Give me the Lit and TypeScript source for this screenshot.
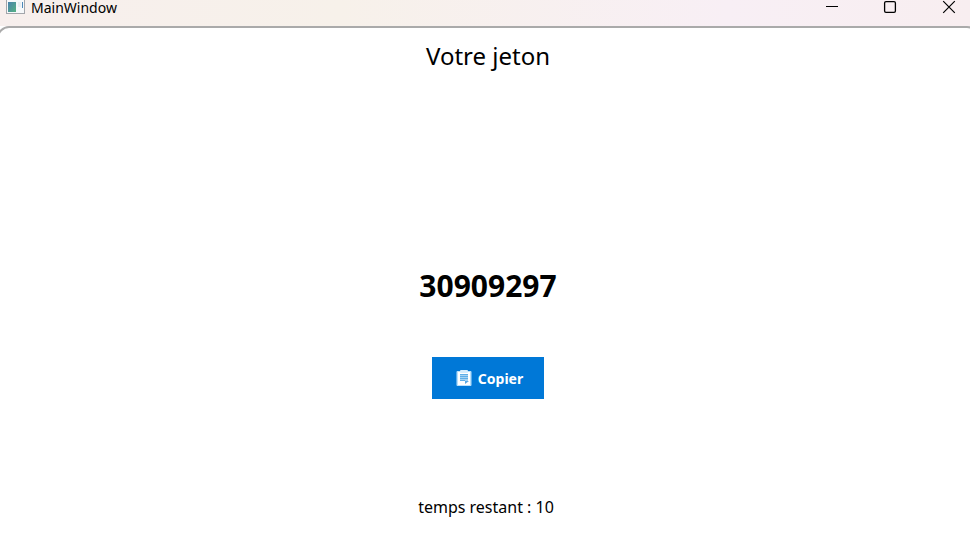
import { LitElement, html, css } from "lit";
import { customElement, property } from "lit/decorators.js";

@customElement("title-bar")
class TitleBar extends LitElement {
  @property() caption = "";

  static styles = css`
    :host {
      display: flex;
      align-items: flex-start;
      justify-content: space-between;
      height: 26px;
      background: linear-gradient(90deg, #f7efed 0%, #f7f1ea 35%, #f8eff5 75%, #f8eef0 100%);
      color: #000;
    }
    .caption {
      display: flex;
      align-items: flex-start;
      gap: 6px;
      padding-left: 6px;
      font-size: 14px;
      line-height: 16px;
    }
    .controls {
      display: flex;
    }
    button {
      display: flex;
      justify-content: center;
      width: 58px;
      height: 16px;
      padding: 0;
      border: 0;
      background: none;
      color: inherit;
    }
    .close {
      width: 51px;
      padding-left: 9px;
    }
    svg {
      display: block;
    }
  `;

  render() {
    return html`
      <div class="caption">
        <svg width="19" height="15" viewBox="0 0 19 15" aria-hidden="true">
          <defs>
            <linearGradient id="pane" x1="0" y1="0" x2="1" y2="1">
              <stop offset="0" stop-color="#4a82ad" />
              <stop offset="1" stop-color="#55b183" />
            </linearGradient>
          </defs>
          <rect x="0" y="-2" width="19" height="16" fill="#a3a6ab" />
          <rect x="1" y="-1" width="17" height="14" fill="#f6f8fa" />
          <rect x="2" y="2" width="8" height="10" fill="url(#pane)" />
          <rect x="12" y="2" width="3" height="5" fill="#e9edf0" />
          <rect x="16" y="2" width="1" height="6" fill="#4c87b8" />
        </svg>
        <span>${this.caption}</span>
      </div>
      <div class="controls">
        <button aria-label="Réduire">
          <svg width="14" height="14" viewBox="0 0 14 14"><path d="M1 6.5h12" stroke="#000" /></svg>
        </button>
        <button aria-label="Agrandir">
          <svg width="14" height="14" viewBox="0 0 14 14">
            <rect x="1.6" y="1.6" width="10.8" height="10.8" rx="1.4" fill="none" stroke="#000" stroke-width="1.3" />
          </svg>
        </button>
        <button class="close" aria-label="Fermer">
          <svg width="14" height="14" viewBox="0 0 14 14">
            <path d="M1.2 1.2l11.6 11.6M12.8 1.2L1.2 12.8" stroke="#000" stroke-width="1.2" />
          </svg>
        </button>
      </div>
    `;
  }
}

@customElement("app-root")
class AppRoot extends LitElement {
  @property() token = "30909297";
  @property({ type: Number }) remaining = 10;

  static styles = css`
    :host {
      display: flex;
      flex-direction: column;
      height: 100vh;
      overflow: hidden;
      background: #fff;
      color: #000;
      font-family: "Noto Sans", "Open Sans", sans-serif;
    }
    title-bar {
      flex: none;
    }
    /* The rounded frame runs slightly past the window's edges. */
    main {
      flex: 1;
      display: flex;
      flex-direction: column;
      align-items: center;
      box-sizing: border-box;
      margin: 0 -9px -8px -3px;
      padding: 12px 0 23px;
      border: 2px solid #aaa;
      border-radius: 12px;
      background: #fff;
    }
    h1 {
      margin: 0;
      font-size: 24px;
      font-weight: 400;
      line-height: 32px;
    }
    .token {
      flex: 1;
      display: flex;
      flex-direction: column;
      align-items: center;
      justify-content: center;
      gap: 51px;
      padding-top: 98px;
      box-sizing: border-box;
    }
    output {
      font-size: 30px;
      font-weight: 700;
      line-height: 40px;
    }
    .copy {
      display: flex;
      align-items: center;
      justify-content: center;
      gap: 6px;
      width: 112px;
      height: 42px;
      padding: 0 0 0 3px;
      border: 0;
      background: #0078d7;
      color: #fff;
      font: 700 14px "Noto Sans", "Open Sans", sans-serif;
    }
    .remaining {
      margin: 0;
      font-size: 16px;
      line-height: 24px;
      padding-right: 4px;
    }
  `;

  private copy() {
    navigator.clipboard?.writeText(this.token);
  }

  render() {
    return html`
      <title-bar caption="MainWindow"></title-bar>
      <main>
        <h1>Votre jeton</h1>
        <div class="token">
          <output>${this.token}</output>
          <button class="copy" @click=${this.copy}>
            <svg width="16" height="18" viewBox="0 0 16 18" aria-hidden="true">
              <rect x="0.5" y="2" width="15" height="15" rx="1" fill="#b9e0fb" />
              <rect x="2" y="3" width="12" height="13" fill="#fff" />
              <rect x="4" y="1" width="8" height="3" rx="1" fill="#d5ecfd" />
              <rect x="4" y="5" width="8" height="7" fill="#a5d3f3" />
              <path d="M4 5.5h8M4 7.5h8M4 9.5h8M4 11.5h5" stroke="#5faee8" />
              <path d="M9 15v-3h4z" fill="#5aa8e4" />
            </svg>
            <span>Copier</span>
          </button>
        </div>
        <p class="remaining">temps restant : ${this.remaining}</p>
      </main>
    `;
  }
}
